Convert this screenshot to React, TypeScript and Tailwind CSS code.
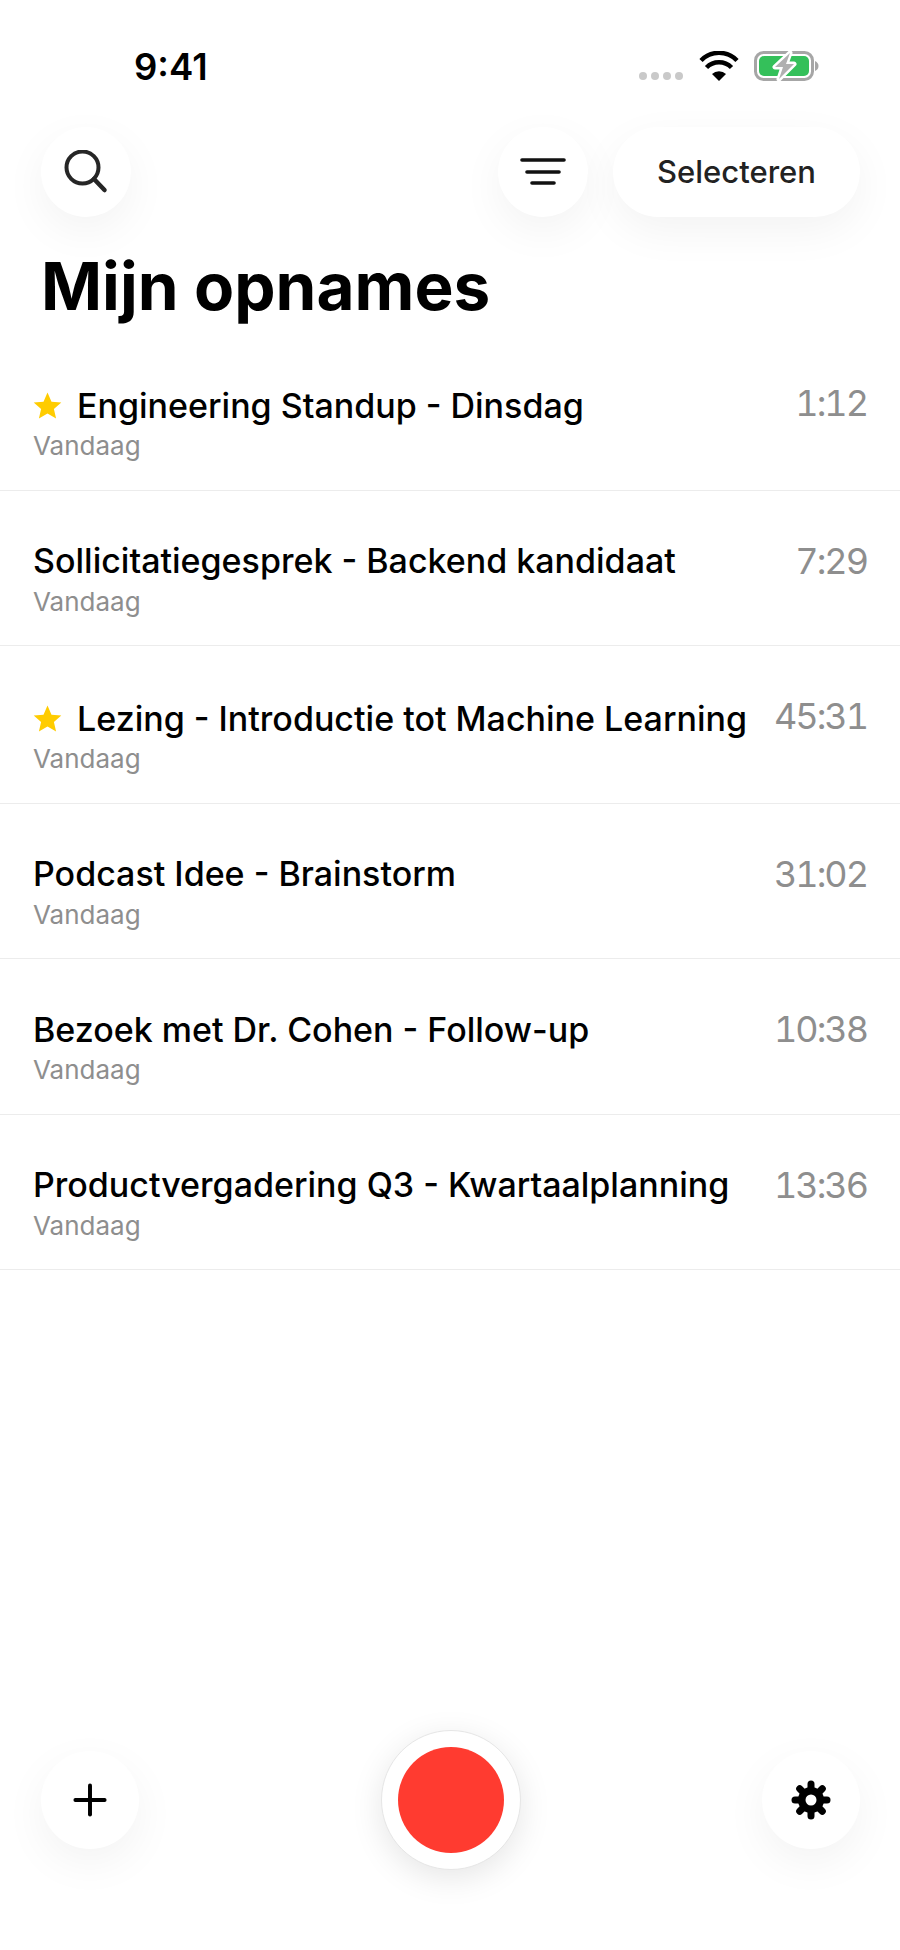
import { Plus } from 'lucide-react';

const FONT = "font-['Inter','Liberation_Sans',sans-serif]";

const recordings = [
  { title: 'Engineering Standup - Dinsdag', time: '1:12', starred: true },
  { title: 'Sollicitatiegesprek - Backend kandidaat', time: '7:29', starred: false },
  { title: 'Lezing - Introductie tot Machine Learning', time: '45:31', starred: true },
  { title: 'Podcast Idee - Brainstorm', time: '31:02', starred: false },
  { title: 'Bezoek met Dr. Cohen - Follow-up', time: '10:38', starred: false },
  { title: 'Productvergadering Q3 - Kwartaalplanning', time: '13:36', starred: false },
];

const softShadow = 'shadow-[0_14px_44px_rgba(0,0,0,0.05)]';

function StatusBar() {
  return (
    <div className="flex h-[127px] shrink-0 items-start justify-between pl-[134px] pr-[81px] pt-[46px]">
      <span className="text-[36.5px] font-semibold leading-[42px] text-black">9:41</span>
      <div className="flex items-start pt-[5px]">
        <div className="mr-[16px] mt-[21px] flex gap-[4px]">
          <span className="h-[8px] w-[8px] rounded-full bg-[#c9c9c9]" />
          <span className="h-[8px] w-[8px] rounded-full bg-[#c9c9c9]" />
          <span className="h-[8px] w-[8px] rounded-full bg-[#c9c9c9]" />
          <span className="h-[8px] w-[8px] rounded-full bg-[#c9c9c9]" />
        </div>
        <svg width="40" height="30" viewBox="0 0 40 30" className="mr-[15px]">
          <path d="M20 30 L13 23 A10 10 0 0 1 27 23 Z" fill="#000" />
          <path d="M7.5 16.5 A17.5 17.5 0 0 1 32.5 16.5" fill="none" stroke="#000" strokeWidth="4.5" />
          <path d="M2 9.5 A25 25 0 0 1 38 9.5" fill="none" stroke="#000" strokeWidth="4.5" />
        </svg>
        <svg width="65" height="30" viewBox="0 0 65 30">
          <rect x="1.5" y="1.5" width="57" height="27" rx="8" fill="none" stroke="#a6a6a6" strokeWidth="3" />
          <rect x="5" y="5" width="50" height="20" rx="5" fill="#34c05a" />
          <path d="M61 10 C63.5 11 64.5 13 64.5 15 C64.5 17 63.5 19 61 20 Z" fill="#a6a6a6" />
          <path
            d="M36 2 L21 16 H29 L25 28 L40 13 H32 Z"
            fill="#b0b0b0"
            stroke="#fff"
            strokeWidth="5"
            strokeLinejoin="round"
            paintOrder="stroke"
          />
        </svg>
      </div>
    </div>
  );
}

function CircleButton({ children, size }: { children: React.ReactNode; size: string }) {
  return (
    <button className={`flex ${size} items-center justify-center rounded-full bg-white ${softShadow}`}>
      {children}
    </button>
  );
}

function Star() {
  return (
    <svg width="29" height="27" viewBox="0 0 28 27" className="mr-[15px] shrink-0">
      <path d="M14 0.5 L18 9.7 L27.8 10.5 L20.4 17 L22.6 26.5 L14 21.5 L5.4 26.5 L7.6 17 L0.2 10.5 L10 9.7 Z" fill="#ffcc00" />
    </svg>
  );
}

function RecordingRow({ title, time, starred }: { title: string; time: string; starred: boolean }) {
  return (
    <div className="flex items-start justify-between border-b border-[#ececec] pl-[33px] pr-[33px] pt-[49px] pb-[23.5px]">
      <div>
        <div className={`flex items-center text-[34px] font-[550] text-black ${starred ? 'h-[44px] pt-[2px]' : 'h-[42px]'}`}>
          {starred && <Star />}
          <span className="whitespace-nowrap">{title}</span>
        </div>
        <div className="text-[26px] leading-[40px] text-[#8e8e8e]">Vandaag</div>
      </div>
      <span className="text-[36px] leading-[42px] tracking-[-2px] text-[#8e8e8e] tabular-nums">{time}</span>
    </div>
  );
}

export default function App() {
  return (
    <div className={`flex h-[1950px] w-[900px] flex-col bg-white ${FONT}`}>
      <StatusBar />

      {/* Top actions */}
      <div className="flex shrink-0 items-center justify-between pl-[41px] pr-[40px]">
        <CircleButton size="h-[90px] w-[90px]">
          <svg width="44" height="44" viewBox="0 0 44 44" fill="none" stroke="#262626" strokeWidth="4" strokeLinecap="round">
            <circle cx="18.5" cy="17.5" r="16" />
            <path d="M30 29 L40.5 40" strokeWidth="4.5" />
          </svg>
        </CircleButton>
        <div className="flex items-center gap-[25px]">
          <CircleButton size="h-[90px] w-[90px]">
            <svg width="46" height="28" viewBox="0 0 46 28" fill="none" stroke="#111" strokeWidth="3.6" strokeLinecap="round">
              <path d="M2 2 H44" />
              <path d="M7 14 H39" />
              <path d="M12 25 H34" />
            </svg>
          </CircleButton>
          <button className={`h-[90px] w-[247px] rounded-full bg-white text-[31px] font-medium text-[#222] ${softShadow}`}>
            Selecteren
          </button>
        </div>
      </div>

      <h1 className="shrink-0 pl-[41px] pt-[30px] text-[65.6px] font-bold leading-[78px] text-black">Mijn opnames</h1>

      <div className="mt-[8px] shrink-0">
        {recordings.map((r) => (
          <RecordingRow key={r.title} title={r.title} time={r.time} starred={r.starred} />
        ))}
      </div>

      {/* Bottom actions */}
      <div className="mt-auto flex items-center justify-between pb-[80px] pl-[41px] pr-[40px]">
        <CircleButton size="h-[98px] w-[98px]">
          <Plus size={50} strokeWidth={1.9} color="#000" />
        </CircleButton>
        <button className="flex h-[140px] w-[140px] items-center justify-center rounded-full border border-[#e6e6e6] bg-white shadow-[0_8px_32px_rgba(0,0,0,0.1)]">
          <span className="h-[106px] w-[106px] rounded-full bg-[#ff3b30]" />
        </button>
        <CircleButton size="h-[98px] w-[98px]">
          <svg width="40" height="40" viewBox="0 0 40 40">
            <g stroke="#000" strokeWidth="7" strokeLinecap="round">
              <path d="M20 4 V36" />
              <path d="M4 20 H36" />
              <path d="M8.7 8.7 L31.3 31.3" />
              <path d="M31.3 8.7 L8.7 31.3" />
            </g>
            <circle cx="20" cy="20" r="13" fill="#000" />
            <circle cx="20" cy="20" r="5.5" fill="#fff" />
          </svg>
        </CircleButton>
      </div>
    </div>
  );
}
